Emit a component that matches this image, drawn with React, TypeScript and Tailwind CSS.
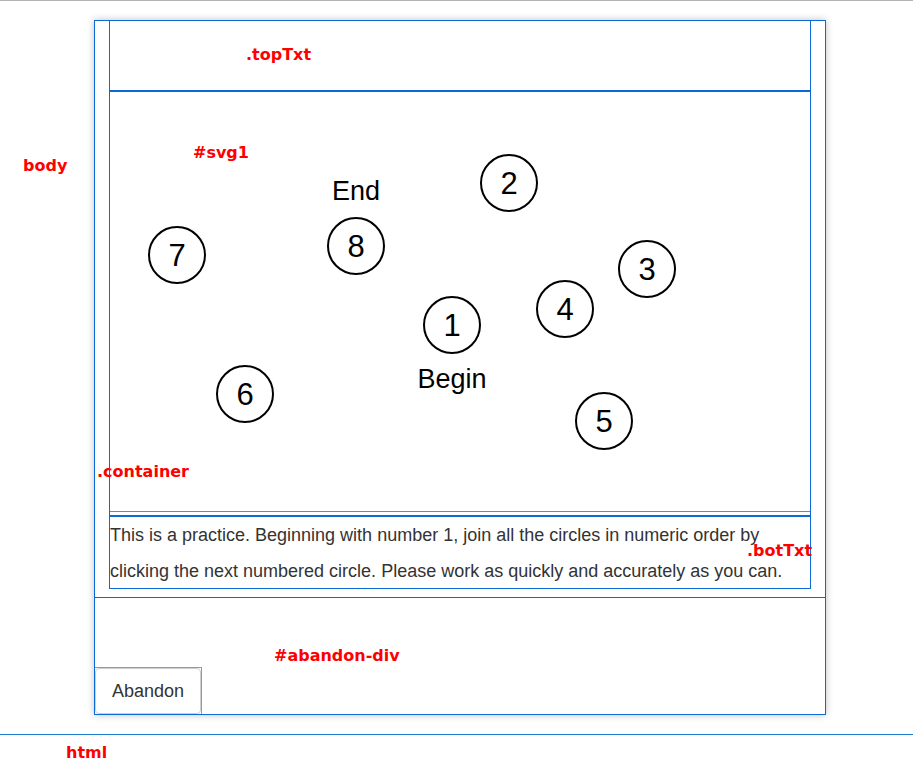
import React from "react";

interface Node {
  n: number;
  x: number;
  y: number;
}

// circle centres, relative to the svg's top-left corner
const nodes: Node[] = [
  { n: 1, x: 342, y: 233 },
  { n: 2, x: 399, y: 91 },
  { n: 3, x: 537, y: 177 },
  { n: 4, x: 455, y: 217 },
  { n: 5, x: 494, y: 329 },
  { n: 6, x: 135, y: 302 },
  { n: 7, x: 67, y: 163 },
  { n: 8, x: 246, y: 154 },
];

const labels = [
  { text: ".topTxt", left: 246, top: 44 },
  { text: "#svg1", left: 193, top: 142 },
  { text: "body", left: 23, top: 155 },
  { text: ".container", left: 97, top: 461 },
  { text: ".botTxt", left: 747, top: 540 },
  { text: "#abandon-div", left: 274, top: 645 },
  { text: "html", left: 66, top: 742 },
];

const TrailSvg = () => (
  <svg width="700" height="419" className="block" style={{ fontFamily: '"Liberation Sans", Arial, sans-serif' }}>
    <text x={246} y={108} fontSize={27} textAnchor="middle" fill="#000">
      End
    </text>
    <text x={342} y={296} fontSize={27} textAnchor="middle" fill="#000">
      Begin
    </text>
    {nodes.map((c) => (
      <g key={c.n}>
        <circle cx={c.x} cy={c.y} r={28} fill="#fff" stroke="#000" strokeWidth={2} />
        <text x={c.x} y={c.y + 11} fontSize={31} textAnchor="middle" fill="#000">
          {c.n}
        </text>
      </g>
    ))}
  </svg>
);

export default function App() {
  return (
    <div className="relative min-h-[771px] bg-white font-['Liberation_Sans',Arial,sans-serif]">
      {/* html */}
      <div className="border-t border-[#b3b3b3] border-b border-b-[#1e7bcc] pt-[19px] pb-[19px]">
        {/* body */}
        <div className="ml-[94px] w-[732px] h-[695px] border border-[#0a6bd6] shadow-[0_0_7px_rgba(0,0,0,0.25)] flex flex-col">
          {/* .container */}
          <div className="ml-[14px] w-[702px] border-x border-b border-[#0a6bd6] flex flex-col">
            <div className="h-[71px] border-b-2 border-[#0a6bd6]" />
            <div className="h-[420px] border-b border-[#20b394]">
              <TrailSvg />
            </div>
            <div className="h-[3px]" />
            <div className="border-t-2 border-[#0a6bd6]">
              <p className="text-[18px] leading-[36px] text-[#333] h-[71px] overflow-hidden">
                This is a practice. Beginning with number 1, join all the circles in numeric order by clicking the next
                numbered circle. Please work as quickly and accurately as you can.
              </p>
            </div>
          </div>
          <div className="h-[8px]" />
          {/* #abandon-div */}
          <div className="flex-1 border-t border-[#0a6bd6] flex items-end">
            <div className="w-[107px] h-[47px] border-t border-r border-[#d4902c]">
              <button className="w-full h-full border border-[#cfcfcf] rounded-[4px] bg-white text-[18px] text-[#333]">
                Abandon
              </button>
            </div>
          </div>
        </div>
      </div>

      {labels.map((l) => (
        <span
          key={l.text}
          className="absolute text-[16px] leading-[22px] font-bold text-[#ff0000] font-['DejaVu_Sans',Verdana,sans-serif]"
          style={{ left: l.left, top: l.top }}
        >
          {l.text}
        </span>
      ))}
    </div>
  );
}
